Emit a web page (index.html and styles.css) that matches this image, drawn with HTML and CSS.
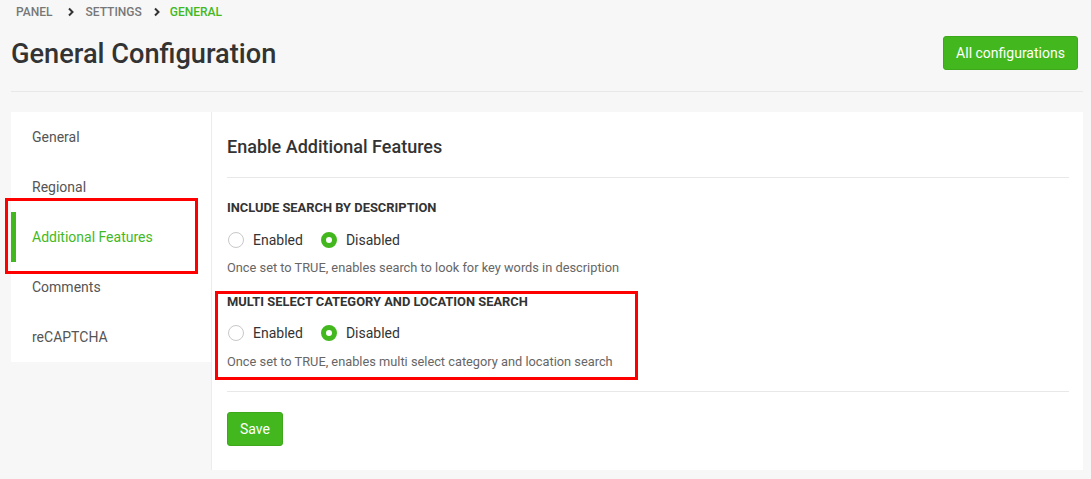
FILE: index.html
```html
<!DOCTYPE html>
<html>
<head>
<meta charset="utf-8">
<link rel="stylesheet" href="styles.css">
</head>
<body>
<div class="page">
  <nav class="crumbs">
    <span class="crumb">PANEL</span>
    <svg class="chev chev-1" viewBox="0 0 8 10" width="8" height="10"><path d="M2 1.5 L5.5 5 L2 8.5" fill="none" stroke="#333" stroke-width="2"/></svg>
    <span class="crumb">SETTINGS</span>
    <svg class="chev chev-2" viewBox="0 0 8 10" width="8" height="10"><path d="M2 1.5 L5.5 5 L2 8.5" fill="none" stroke="#333" stroke-width="2"/></svg>
    <span class="crumb active">GENERAL</span>
  </nav>
  <header class="head">
    <h1 class="title">General Configuration</h1>
    <button class="btn btn-top">All configurations</button>
  </header>
  <div class="layout">
    <aside class="side">
      <a class="side-item">General</a>
      <a class="side-item">Regional</a>
      <a class="side-item current">Additional Features<span class="mark mark-side"></span></a>
      <a class="side-item">Comments</a>
      <a class="side-item">reCAPTCHA</a>
    </aside>
    <main class="panel">
      <h2 class="panel-title">Enable Additional Features</h2>
      <div class="field field-1">
        <div class="label">INCLUDE SEARCH BY DESCRIPTION</div>
        <div class="radios">
          <label class="radio"><span class="dot"></span>Enabled</label>
          <label class="radio"><span class="dot on"></span>Disabled</label>
        </div>
        <div class="help">Once set to TRUE, enables search to look for key words in description</div>
      </div>
      <div class="field field-2">
        <span class="mark mark-field"></span>
        <div class="label">MULTI SELECT CATEGORY AND LOCATION SEARCH</div>
        <div class="radios">
          <label class="radio"><span class="dot"></span>Enabled</label>
          <label class="radio"><span class="dot on"></span>Disabled</label>
        </div>
        <div class="help">Once set to TRUE, enables multi select category and location search</div>
      </div>
      <div class="actions">
        <button class="btn btn-save">Save</button>
      </div>
    </main>
  </div>
</div>
</body>
</html>
```

FILE: styles.css
```css
* { box-sizing: border-box; }
html, body { margin: 0; padding: 0; }
body {
  background: #f7f7f7;
  font-family: Roboto, "Liberation Sans", sans-serif;
  color: #333;
  width: 1091px;
  height: 479px;
  overflow: hidden;
}
.page { padding: 0 8px 0 11px; }
.crumbs {
  display: flex;
  align-items: center;
  height: 24px;
  padding-left: 5px;
}
.crumb {
  font-size: 12px;
  font-weight: 500;
  color: #777;
}
.crumb.active { color: #44b91f; }
.chev-1 { margin: 0 11px 0 14px; }
.chev-2 { margin: 0 9px 0 11px; }
.head {
  display: flex;
  justify-content: space-between;
  align-items: center;
  height: 68px;
  border-bottom: 1px solid #e8e8e8;
  padding-bottom: 8px;
}
.title {
  margin: 0;
  font-size: 27.2px;
  font-weight: 500;
  color: #333;
}
.btn {
  background: #43b81e;
  color: #fff;
  border: 1px solid #3ca81a;
  border-radius: 3px;
  font-family: Roboto, "Liberation Sans", sans-serif;
  font-size: 14px;
  cursor: pointer;
}
.btn-top {
  height: 34px;
  width: 135px;
  padding: 0;
  margin-right: 5px;
  margin-top: -2px;
}
.layout {
  display: flex;
  margin-top: 20px;
  align-items: flex-start;
}
.side {
  width: 200px;
  background: #fff;
  display: flex;
  flex-direction: column;
}
.side-item {
  position: relative;
  display: flex;
  align-items: center;
  height: 50px;
  padding-left: 21px;
  font-size: 14px;
  color: #555;
}
.side-item.current {
  color: #44b91f;
  border-left: 5px solid #43b81e;
  padding-left: 16px;
}
.mark {
  position: absolute;
  border: 3px solid #ff0000;
  pointer-events: none;
}
.mark-side {
  left: -11px;
  top: -14px;
  width: 193px;
  height: 76px;
}
.panel {
  flex: 1;
  background: #fff;
  border-left: 1px solid #ececec;
  height: 358px;
  padding: 0 14px 0 15px;
}
.panel-title {
  margin: 0;
  height: 66px;
  display: flex;
  align-items: center;
  font-size: 18px;
  font-weight: 500;
  color: #333;
  padding-top: 3px;
  border-bottom: 1px solid #e8e8e8;
}
.field { position: relative; }
.field-1 { padding-top: 22px; }
.field-2 { padding-top: 19px; }
.label {
  font-size: 12.9px;
  font-weight: 700;
  color: #333;
  height: 16px;
  line-height: 16px;
}
.radios {
  display: flex;
  gap: 17px;
  margin-top: 15px;
  height: 18px;
}
.field-2 .radios { margin-top: 14px; }
.radio {
  display: flex;
  align-items: center;
  font-size: 14px;
  color: #333;
}
.dot {
  width: 16px;
  height: 16px;
  border-radius: 50%;
  border: 1px solid #c8c8c8;
  margin-right: 9px;
  margin-left: 1px;
  background: #fff;
}
.dot.on { border: 5px solid #43b81e; }
.help {
  font-size: 12.8px;
  color: #666;
  margin-top: 12px;
  height: 14px;
  line-height: 14px;
}
.field-2 .help { margin-top: 13px; }
.mark-field {
  left: -12px;
  top: 16px;
  width: 423px;
  height: 89px;
}
.actions {
  margin-top: 22px;
  border-top: 1px solid #e8e8e8;
  padding-top: 20px;
}
.btn-save {
  width: 56px;
  height: 34px;
  padding: 0;
  font-size: 14px;
}
```
